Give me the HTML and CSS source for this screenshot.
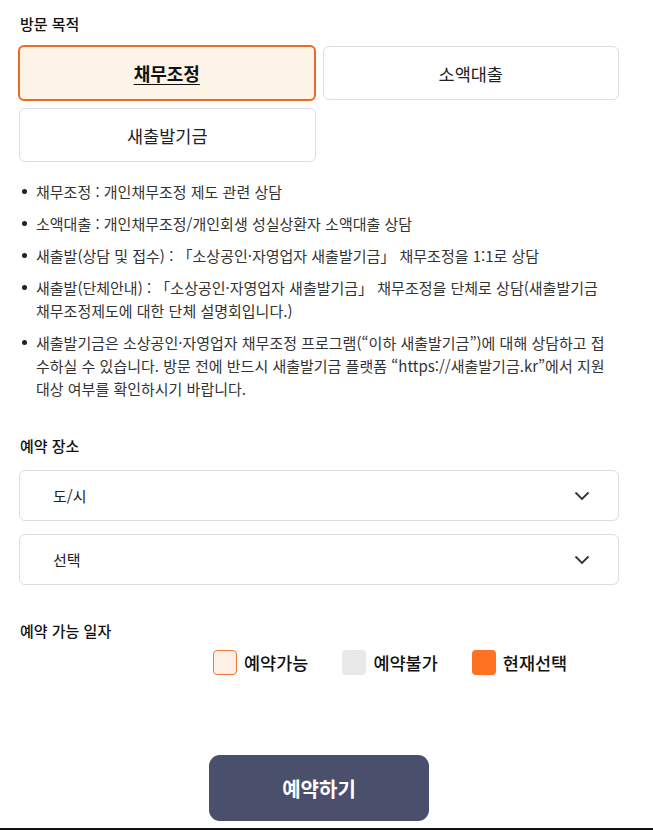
FILE: index.html
```html
<!DOCTYPE html>
<html lang="ko">
<head>
<meta charset="utf-8">
<link rel="stylesheet" href="styles.css">
</head>
<body>
<div class="page">
  <div class="section-title first">방문 목적</div>
  <div class="purpose-grid">
    <button class="purpose selected">채무조정</button>
    <button class="purpose">소액대출</button>
    <button class="purpose">새출발기금</button>
  </div>
  <ul class="notes">
    <li>채무조정 : 개인채무조정 제도 관련 상담</li>
    <li>소액대출 : 개인채무조정/개인회생 성실상환자 소액대출 상담</li>
    <li>새출발(상담 및 접수) : 「소상공인·자영업자 새출발기금」 채무조정을 1:1로 상담</li>
    <li class="keep">새출발(단체안내) : 「소상공인·자영업자 새출발기금」 채무조정을 단체로 상담(새출발기금 채무조정제도에 대한 단체 설명회입니다.)</li>
    <li>새출발기금은 소상공인·자영업자 채무조정 프로그램(“이하 새출발기금”)에 대해 상담하고 접수하실 수 있습니다. 방문 전에 반드시 새출발기금 플랫폼 “https://새출발기금.kr”에서 지원 대상 여부를 확인하시기 바랍니다.</li>
  </ul>

  <div class="section-title place">예약 장소</div>
  <div class="select">
    <span>도/시</span>
    <svg class="chev" width="16" height="10" viewBox="0 0 16 10"><path d="M1.5 1.5 L8 8 L14.5 1.5" fill="none" stroke="#333" stroke-width="1.8"/></svg>
  </div>
  <div class="select">
    <span>선택</span>
    <svg class="chev" width="16" height="10" viewBox="0 0 16 10"><path d="M1.5 1.5 L8 8 L14.5 1.5" fill="none" stroke="#333" stroke-width="1.8"/></svg>
  </div>

  <div class="section-title date">예약 가능 일자</div>
  <div class="legend">
    <div class="legend-item"><span class="swatch avail"></span>예약가능</div>
    <div class="legend-item"><span class="swatch unavail"></span>예약불가</div>
    <div class="legend-item"><span class="swatch current"></span>현재선택</div>
  </div>

  <div class="submit-wrap">
    <button class="submit">예약하기</button>
  </div>
</div>
<div class="bottom-line"></div>
</body>
</html>
```

FILE: styles.css
```css
* { box-sizing: border-box; }
html, body { margin: 0; padding: 0; background: #fff; }
body {
  font-family: "Noto Sans CJK KR", "Noto Sans", sans-serif;
  color: #222;
  width: 653px;
  height: 830px;
  overflow: hidden;
  position: relative;
}
.page {
  width: 600px;
  margin-left: 19px;
  padding-top: 14px;
}
.section-title {
  font-size: 15px;
  line-height: 20px;
  font-weight: 500;
  color: #111;
  margin-left: 1px;
}
.purpose-grid {
  margin-top: 12px;
  display: grid;
  grid-template-columns: 1fr 1fr;
  column-gap: 7px;
  row-gap: 7px;
}
.purpose {
  height: 54px;
  border: 1px solid #dedede;
  border-radius: 6px;
  background: #fff;
  font-family: inherit;
  font-size: 17.5px;
  color: #222;
  padding: 0;
}
.purpose.selected {
  border: 2px solid #ec6b22;
  background: #fef3e7;
  font-weight: 700;
  font-size: 18px;
  text-decoration: underline;
  text-underline-offset: 3px;
  color: #111;
  margin: -1px 0 0 -1px;
  height: 56px;
}
.notes {
  list-style: none;
  margin: 18px 0 0;
  padding: 0;
  width: 598px;
}
.notes li {
  position: relative;
  padding-left: 17px;
  font-size: 15px;
  line-height: 23px;
  color: #333;
  margin-bottom: 9px;
}
.notes li.keep { word-break: keep-all; }
.notes li::before {
  content: "";
  position: absolute;
  left: 3px;
  top: 9px;
  width: 5px;
  height: 5px;
  border-radius: 50%;
  background: #222;
}
.section-title.place { margin-top: 36px; }
.select {
  margin-top: 14px;
  height: 51px;
  border: 1px solid #dedede;
  border-radius: 6px;
  display: flex;
  align-items: center;
  justify-content: space-between;
  padding: 0 28px 0 33px;
  font-size: 15px;
  color: #222;
}
.select + .select { margin-top: 13px; }
.chev { display: block; margin-top: 1px; }
.section-title.date { margin-top: 36px; }
.legend {
  margin-top: 9px;
  display: flex;
  padding-left: 194px;
  gap: 0;
}
.legend-item {
  display: flex;
  align-items: center;
  font-size: 17.5px;
  font-weight: 500;
  color: #111;
  line-height: 24px;
  margin-right: 34px;
}
.swatch {
  width: 24px;
  height: 25px;
  border-radius: 4px;
  margin-right: 7px;
  display: inline-block;
}
.swatch.avail { background: #fef0e4; border: 1px solid #f2783a; }
.swatch.unavail { background: #e8e8e8; }
.swatch.current { background: #ff7222; }
.submit-wrap {
  margin-top: 80px;
  display: flex;
  justify-content: center;
}
.submit {
  width: 220px;
  height: 66px;
  border: none;
  border-radius: 11px;
  background: #4a506b;
  color: #fff;
  font-family: inherit;
  font-size: 20px;
  font-weight: 700;
}
.bottom-line {
  position: absolute;
  left: 0;
  right: 0;
  top: 828px;
  height: 2px;
  background: #111;
}
```
